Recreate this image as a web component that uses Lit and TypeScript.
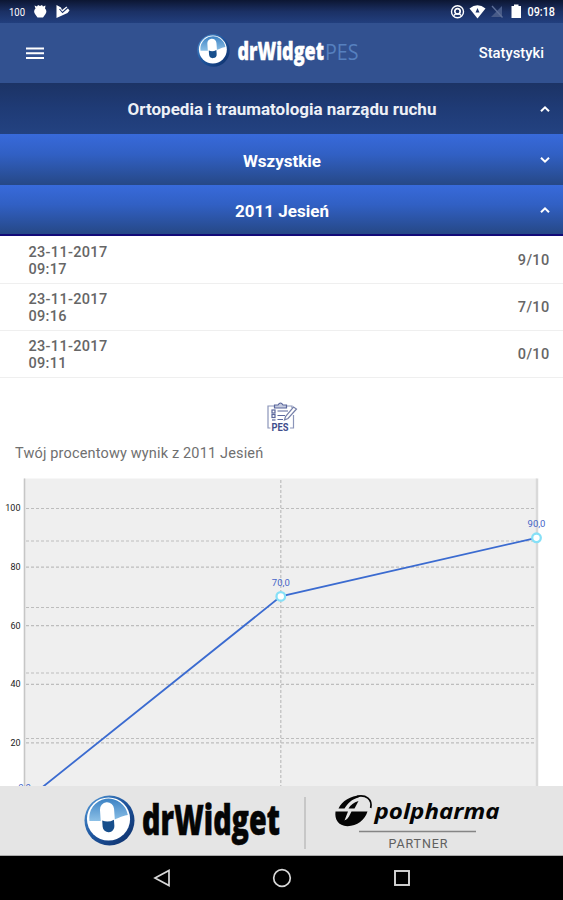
import { LitElement, html, svg, css } from "lit";
import { customElement, property } from "lit/decorators.js";

@customElement("pill-logo")
class PillLogo extends LitElement {
  static styles = css`
    :host { display: block; flex: none; }
    svg { display: block; width: 100%; height: 100%; }
  `;
  render() {
    return html`<svg viewBox="0 0 52 52">
      <defs>
        <linearGradient id="rim" x1="0" y1="0" x2="1" y2="1">
          <stop offset="0" stop-color="#5aa0dc" /><stop offset=".45" stop-color="#1f57a0" /><stop offset="1" stop-color="#0c2c66" />
        </linearGradient>
        <linearGradient id="sky" x1="0" y1="0" x2="0" y2="1">
          <stop offset="0" stop-color="#3c82c4" /><stop offset="1" stop-color="#8cc0e6" />
        </linearGradient>
      </defs>
      <circle cx="26" cy="26" r="25.5" fill="url(#rim)" />
      <circle cx="25" cy="24.5" r="22" fill="#fff" />
      <path d="M5.500 26.500A19.800 19.800 0 0 1 44.700 20.500C37 21.500 33 25.500 26 26.500Z" fill="url(#sky)" />
      <g transform="rotate(-4 25 25)">
        <path d="M17 27V14.500a7.200 7.200 0 0 1 14.400 0V27Z" fill="#fff" />
        <path d="M18.500 25.500Q24.500 28.500 30.500 25.500V32a6 6 0 0 1-12 0Z" fill="#174f8c" />
      </g>
    </svg>`;
  }
}

@customElement("section-bar")
class SectionBar extends LitElement {
  @property({ type: Boolean }) open = false;
  static styles = css`
    :host {
      display: grid; grid-template-columns: 38px 1fr 37px; align-items: center; height: 51px; box-sizing: border-box;
      background: linear-gradient(#386adb, #3160c4 40%, #264886);
      color: #fff; font-weight: 700; font-size: 17px; text-align: center;
    }
    :host([dark]) { background: linear-gradient(#1c3365, #1f3b76 50%, #234281); color: #edf0f6; }
    :host([last]) { border-bottom: 2px solid #120a78; }
    .label { grid-column: 2; padding-top: 3px; }
    :host([dark]) .label { padding-top: 0; }
    .chevron { width: 10px; height: 8px; justify-self: center; display: block; }
  `;
  render() {
    return html`<span class="label"><slot></slot></span>
      <svg class="chevron" viewBox="0 0 10 8">
        <path d=${this.open ? "M1 6.300L5 2.300L9 6.300" : "M1 1.700L5 5.700L9 1.700"} fill="none" stroke="#fff" stroke-width="2" />
      </svg>`;
  }
}

@customElement("score-chart")
class ScoreChart extends LitElement {
  static styles = css`
    :host { display: block; }
    svg { display: block; }
    .grid { stroke: #bdbdbd; stroke-width: 1.2; stroke-dasharray: 3 2; fill: none; }
    .tick { font-size: 9px; fill: #222; text-anchor: end; }
    .value { font-size: 9.500px; fill: #4565c8; text-anchor: middle; }
  `;
  render() {
    const y = (v: number) => 331 - v * 2.93 + 0.5;
    const points = [
      { x: 24.5, v: 0, label: "0,0" },
      { x: 280.8, v: 70, label: "70,0" },
      { x: 536.5, v: 90, label: "90,0" },
    ];
    return html`<svg width="563" height="316" viewBox="0 0 563 316">
      <rect x="24" y="8.500" width="513" height="308" fill="#efefef" />
      ${[71, 137.5, 203, 268.5].map((g) => svg`<path class="grid" d="M26 ${g}H536" />`)}
      ${[100, 80, 60, 40, 20].map(
        (t) => svg`<path class="grid" d=${`M26 ${y(t)}H536`} />
          <text class="tick" x="20.500" y=${y(t) + 2.8}>${t}</text>`
      )}
      <path class="grid" d="M280.800 10V316" />
      <path d="M24.500 8.500V316" stroke="#c6c6c6" stroke-width="1.600" />
      <path d="M537 8.500V316" stroke="#d9d9d9" stroke-width="2.500" />
      <path d=${"M" + points.map((p) => `${p.x} ${y(p.v)}`).join("L")} fill="none" stroke="#3b6bd0" stroke-width="1.800" />
      ${points.map(
        (p) => svg`<circle cx=${p.x} cy=${y(p.v)} r="4.300" fill="#fff" stroke="#86e0f7" stroke-width="2.300" />
          <text class="value" x=${p.x} y=${y(p.v) - 10.4}>${p.label}</text>`
      )}
    </svg>`;
  }
}

@customElement("app-root")
class AppRoot extends LitElement {
  static styles = css`
    :host {
      display: flex; flex-direction: column; width: 563px; height: 900px; overflow: hidden;
      background: #fff; font-family: Roboto, "Liberation Sans", sans-serif;
    }
    svg { display: block; flex: none; overflow: visible; }
    .status {
      height: 23px; flex: none; display: flex; align-items: center; justify-content: space-between;
      padding: 0 7px 0 8px; box-sizing: border-box; color: #fff; font-size: 12px;
      background: linear-gradient(#0c1632, #1b3064 50%, #223f7e);
    }
    .bar {
      height: 60px; flex: none; box-sizing: border-box; display: grid; grid-template-columns: 196px 1fr 196px;
      align-items: center; background: #325190; color: #fff;
    }
    .menu { margin-left: 26px; }
    .brand { display: flex; align-items: center; }
    .brand pill-logo { width: 33px; height: 33px; margin: -5px 6px 0 1px; }
    .page { justify-self: end; margin-right: 19px; font-size: 14.800px; font-weight: 500; }
    section-bar { flex: none; }
    .row {
      height: 47px; flex: none; box-sizing: border-box; border-bottom: 1px solid #efefef; display: flex;
      align-items: center; justify-content: space-between; padding: 1px 13.5px 0 28.5px;
      font-size: 14.500px; line-height: 17px; font-weight: 500; color: #666; letter-spacing: .32px;
    }
    .row.first { height: 48px; padding-top: 2px; }
    .summary { height: 92px; flex: none; display: flex; flex-direction: column; }
    .clip { align-self: center; margin: 23px 0 0 1px; }
    .caption { margin: 11px 0 0 15px; font-size: 14.500px; letter-spacing: .16px; line-height: 20px; color: #707070; white-space: nowrap; }
    score-chart { height: 316px; flex: none; }
    .sponsors {
      height: 70px; flex: none; box-sizing: border-box; background: #e5e5e5; border-bottom: 1px solid #aaa;
      display: flex; align-items: center; padding-left: 84px;
    }
    .sponsors pill-logo { width: 51px; height: 51px; margin-right: 5px; }
    .nav { height: 44px; flex: none; background: #000; display: flex; align-items: center; justify-content: center; gap: 100px; }
  `;

  render() {
    const attempts = [
      { day: "23-11-2017", time: "09:17", score: "9/10" },
      { day: "23-11-2017", time: "09:16", score: "7/10" },
      { day: "23-11-2017", time: "09:11", score: "0/10" },
    ];
    return html`
      <div class="status">
        <svg width="64" height="23" viewBox="0 0 64 23" fill="#fff">
          <text x="1" y="16" font-size="11.500" textLength="16" lengthAdjust="spacingAndGlyphs">100</text>
          <path d="M27.500 8.500L26.500 5.500L29 6.500L30 5L32 6L34 5L35 6.500L37.500 5.500L37 8.500Q39.500 11 37.500 14L35 17.500H29.500L27 14Q25 11 27.500 8.500Z" />
          <path d="M48.500 5L53 7.500L54 10L58.500 6.500L61.500 10.500L59.500 13L48.500 18Z" />
          <path d="M51.500 9L54.500 12.500L60 7.500" fill="none" stroke="#1d346b" stroke-width="1.100" />
        </svg>
        <svg width="107" height="23" viewBox="0 0 107 23" fill="#fff">
          <circle cx="8.500" cy="11.800" r="6" fill="none" stroke="#fff" stroke-width="1.400" />
          <circle cx="8.500" cy="11.300" r="2.700" fill="none" stroke="#fff" stroke-width="1.700" />
          <path d="M4.800 15.500L6.500 14H10.500L12.200 15.500" stroke="#fff" fill="none" stroke-width="1.300" />
          <path d="M20.500 8.500Q28.500 2 36.500 8.500L28.500 18.500Z" />
          <path d="M28.500 8L30.500 12.500H26.500Z" fill="#1d346b" />
          <path d="M53 6V17H42Z" fill="#475a87" />
          <path d="M43 6L53.500 17.500" stroke="#5f7099" stroke-width="1.300" />
          <path d="M62.500 6h2.500V4.500h4.500V6h2.500v12h-9.500Z" />
          <text x="78.500" y="16" font-size="12" font-weight="500" textLength="27.500" lengthAdjust="spacingAndGlyphs">09:18</text>
        </svg>
      </div>
      <header class="bar">
        <svg class="menu" width="18" height="14" viewBox="0 0 18 14">
          <path d="M0 2.500H18M0 7.200H18M0 12H18" stroke="#fff" stroke-width="1.900" />
        </svg>
        <div class="brand">
          <pill-logo></pill-logo>
          <svg width="126" height="44" viewBox="0 0 126 44">
            <text x="1.500" y="29" font-family="Open Sans" font-weight="800" font-size="25.500" textLength="86.500"
              lengthAdjust="spacingAndGlyphs" fill="#fff" stroke="#fff" stroke-width=".4">drWidget</text>
            <text x="89" y="29" font-family="Open Sans" font-weight="400" font-size="22.500" textLength="33.500"
              lengthAdjust="spacingAndGlyphs" fill="#5680bf">PES</text>
          </svg>
        </div>
        <span class="page">Statystyki</span>
      </header>
      <section-bar dark open>Ortopedia i traumatologia narządu ruchu</section-bar>
      <section-bar>Wszystkie</section-bar>
      <section-bar last open>2011 Jesień</section-bar>
      ${attempts.map(
        (a, i) => html`<div class="row ${i === 0 ? "first" : ""}">
          <div><div>${a.day}</div><div>${a.time}</div></div>
          <span>${a.score}</span>
        </div>`
      )}
      <div class="summary">
        <svg class="clip" width="32" height="32" viewBox="0 0 32 32" fill="none" stroke="#5b679c" stroke-width="1.200">
          <path d="M4.500 27H2V5H8M21 5H26V7M27.500 14V27H24" stroke="#8b95b9" />
          <path d="M8.500 7V4H12Q14.500 0 17 4H20.500V7Z" fill="#c6cce0" />
          <rect x="6" y="9" width="3" height="3" /><rect x="6" y="13.500" width="3" height="3" /><path d="M6 19H9.500" />
          <path d="M11.500 10H22M11.500 14.500H19M11.500 18.500H17" />
          <path d="M18.500 19L19.500 15.500L27.500 6L30.500 8L22 17.500Z" stroke="#7781aa" />
          <text x="5.500" y="29.500" font-size="10" font-weight="700" fill="#3f4d8c" stroke="none" textLength="17" lengthAdjust="spacingAndGlyphs">PES</text>
        </svg>
        <div class="caption">Twój procentowy wynik z 2011 Jesień</div>
      </div>
      <score-chart></score-chart>
      <footer class="sponsors">
        <pill-logo></pill-logo>
        <svg width="165" height="69" viewBox="0 0 165 69">
          <text x="2" y="49" font-family="Open Sans" font-weight="800" font-size="43" textLength="138"
            lengthAdjust="spacingAndGlyphs" fill="#050505" stroke="#050505" stroke-width=".6">drWidget</text>
          <path d="M165 11V63" stroke="#bdbdbd" stroke-width="1.500" />
        </svg>
        <svg width="210" height="69" viewBox="305 0 210 69">
          <path d="M335.500 25.500H348L344.500 34.500Q347 34 349 30.500L351.500 25.500H367.500C365 34 357 40 347.500 40.200C338 40 334.500 33 335.500 25.500Z" fill="#050505" />
          <path d="M338.500 22.500C342 15 351 9.500 360 9.500L358.500 11.500C352 13 347.500 17.500 344.500 22.500Z" fill="#050505" />
          <path d="M348.500 22.500Q351.500 17 358.500 15L354.500 22.500Z" fill="#050505" />
          <path d="M357 10.300C366 8.500 372.500 13 370.700 22" fill="none" stroke="#050505" stroke-width="1.700" />
          <text x="374.500" y="32.500" font-family="Open Sans" font-weight="700" font-style="italic" font-size="22"
            textLength="125" lengthAdjust="spacingAndGlyphs" fill="#050505">polpharma</text>
          <path d="M359 45.500H476" stroke="#858585" stroke-width="1.500" />
          <text x="388.500" y="62" font-size="12.500" fill="#606060" textLength="59">PARTNER</text>
        </svg>
      </footer>
      <nav class="nav">
        <svg width="20" height="20" viewBox="0 0 20 20"><path d="M3 10L17 2.500V17.500Z" fill="none" stroke="#d8d8d8" stroke-width="1.700" /></svg>
        <svg width="20" height="20" viewBox="0 0 20 20"><circle cx="10" cy="10" r="8.300" fill="none" stroke="#d8d8d8" stroke-width="1.700" /></svg>
        <svg width="20" height="20" viewBox="0 0 20 20"><rect x="3" y="3" width="14" height="14" fill="none" stroke="#d8d8d8" stroke-width="1.900" /></svg>
      </nav>
    `;
  }
}
